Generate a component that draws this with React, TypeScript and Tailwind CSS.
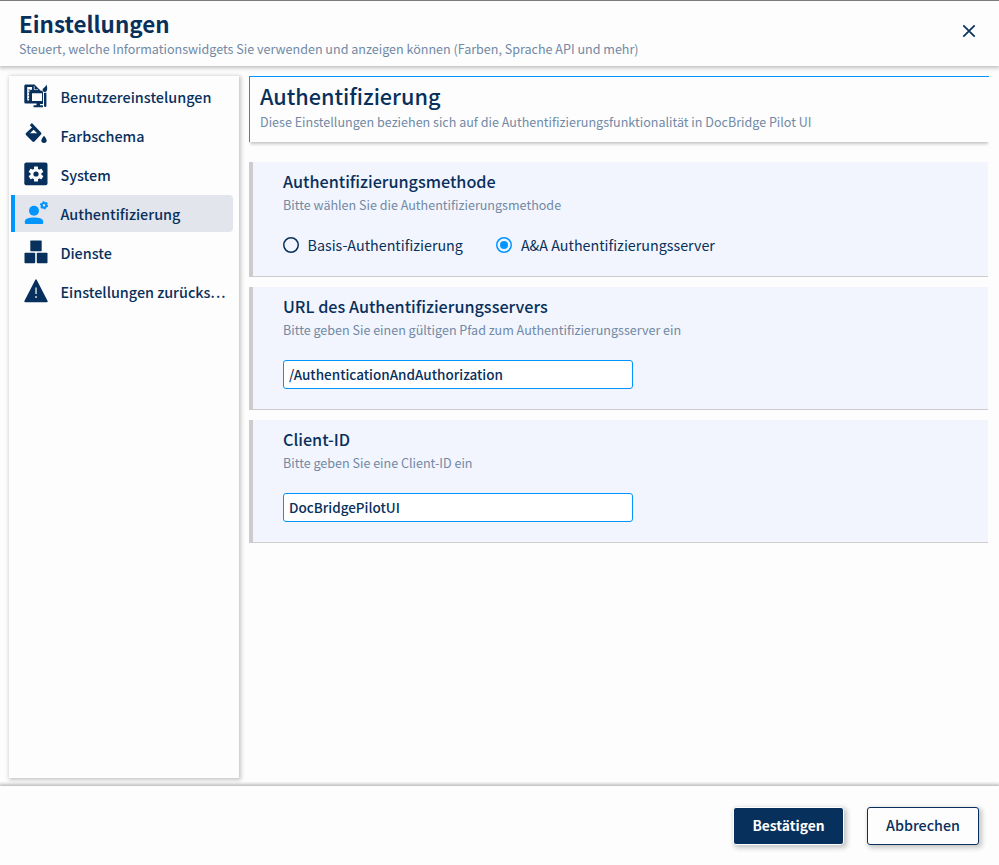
import type { ReactNode } from "react";

const svgClass = "size-6 shrink-0";

function UserSettingsIcon() {
  return (
    <svg viewBox="0 0 24 24" className={svgClass} fill="currentColor">
      <path fillRule="evenodd" d="M.3 2Q.3.500 1.500.500H10.500L16 6V8H7V19.500H1.500Q.3 19.500.3 18ZM3.200 3V16.500H5.200V8.500Q5.500 6 7 5.700H8V3Z" />
      <path d="M4.500 5.500h1.700v1H4.500zM4.500 8h1v1h-1zM4.500 11h1v1h-1zM4.500 14h1v1h-1z" />
      <path d="M10.200 2.200V5.700H14" fill="none" stroke="#fdfdfd" strokeWidth=".7" />
      <path fillRule="evenodd" d="M8 6.500H17Q19 6.500 19 8.500V20H16V21.300H18.500Q19 21.300 19 22V23.200H9.500V22Q9.500 21.300 10 21.300H12.500V19.500H7.500Q5.500 19.500 5.500 17.500V9Q5.500 6.500 8 6.500ZM8 9.200V17H18V9.200Z" />
      <path d="M20 8.700h2.400V21.500q0 1.500-1.200 1.500T20 21.500zM22.300.500q1.200 2.500.900 5-.500 2.600-2.300 2.600-2.400 0-2.400-2.100 0-1.500 1.800-2.500 1.500-1 2-3z" />
    </svg>
  );
}

function BucketIcon() {
  return (
    <svg viewBox="0 0 24 24" className={svgClass} fill="currentColor">
      <path fillRule="evenodd" d="M5.800 2.200 7.900.100 17 9.400Q17.900 10.400 17 11.400L10.500 18.500Q9.500 19.400 8.500 18.500L2 11.900Q1.100 10.900 2 10L8 4.500ZM9.600 6.700 6 10.300H13.200Z" />
      <path d="M20 12.700q2.700 3 2.700 4.500a2.700 2.700 0 0 1-5.400 0q0-1.500 2.700-4.500z" />
    </svg>
  );
}

function SystemIcon() {
  return (
    <svg viewBox="0 0 24 24" className={svgClass}>
      <rect x="0.300" y="0.500" width="23.200" height="22.800" rx="2" fill="currentColor" />
      <g fill="#fdfdfd">
        <circle cx="12" cy="12" r="5.500" />
        <rect x="10" y="4.600" width="4" height="14.800" rx=".5" />
        <rect x="10" y="4.600" width="4" height="14.800" rx=".5" transform="rotate(60 12 12)" />
        <rect x="10" y="4.600" width="4" height="14.800" rx=".5" transform="rotate(120 12 12)" />
      </g>
      <circle cx="12" cy="12" r="2.600" fill="currentColor" />
    </svg>
  );
}

function UserCogIcon() {
  return (
    <svg viewBox="0 0 24 24" className={svgClass} fill="currentColor">
      <circle cx="10" cy="9.700" r="5" />
      <path d="M.8 22V20.500Q.8 16.500 10 16.500T19.200 20.500V22Q19.200 23 18.200 23H1.800Q.8 23 .8 22Z" />
      <circle cx="20" cy="4.300" r="2.300" fill="none" stroke="currentColor" strokeWidth="2.200" />
      <circle cx="20" cy="4.300" r="3.500" fill="none" stroke="currentColor" strokeWidth="1.200" strokeDasharray="1.830 1.830" />
    </svg>
  );
}

function ServicesIcon() {
  return (
    <svg viewBox="0 0 24 24" className={svgClass} fill="currentColor">
      <rect x="6.300" y="0.500" width="11.400" height="10.700" rx=".8" />
      <rect x="0.500" y="12.700" width="10.700" height="10.600" rx=".8" />
      <rect x="12.800" y="12.700" width="10.700" height="10.600" rx=".8" />
    </svg>
  );
}

function ResetIcon() {
  return (
    <svg viewBox="0 0 24 24" className={svgClass}>
      <path d="M12 1.300 22.800 22.300H1.200Z" fill="currentColor" stroke="currentColor" strokeWidth="1.800" strokeLinejoin="round" />
      <path d="M11.200 8.500h1.700v6.500h-1.700zM11.200 17h1.700v2h-1.700z" fill="#b9c2cf" />
    </svg>
  );
}

const menu: { label: string; icon: ReactNode; active?: boolean; clipped?: boolean }[] = [
  { label: "Benutzereinstelungen", icon: <UserSettingsIcon /> },
  { label: "Farbschema", icon: <BucketIcon /> },
  { label: "System", icon: <SystemIcon /> },
  { label: "Authentifizierung", icon: <UserCogIcon />, active: true },
  { label: "Dienste", icon: <ServicesIcon /> },
  { label: "Einstellungen zurücks", icon: <ResetIcon />, clipped: true },
];

function Card({ title, hint, children }: { title: string; hint: string; children: ReactNode }) {
  return (
    <section className="mr-px border-b border-l-4 border-[#cccccc] bg-[#f2f5fd] pt-[7px] pl-[30px]">
      <h3 className="text-[16.2px] leading-6 font-medium">{title}</h3>
      <p className="mt-px text-[12.55px] leading-[22px] text-[#7189a5]">{hint}</p>
      {children}
    </section>
  );
}

function Radio({ label, checked }: { label: string; checked?: boolean }) {
  return (
    <label className="flex items-center gap-2 text-[14.3px] leading-5">
      <svg viewBox="0 0 16 16" className={checked ? "size-4 text-[#0095ff]" : "size-4"}>
        <circle cx="8" cy="8" r="7.250" fill="none" stroke="currentColor" strokeWidth="1.500" />
        {checked && <circle cx="8" cy="8" r="4" fill="currentColor" />}
      </svg>
      <span className="whitespace-nowrap pl-[0.5px]">{label}</span>
    </label>
  );
}

function Field({ value }: { value: string }) {
  return (
    <input
      readOnly
      value={value}
      className="mt-[19px] mb-5 block h-[29px] w-[350px] rounded-[3px] border border-[#0095ff] bg-white px-[5px] pb-[2px] text-[13.5px] leading-5 font-medium outline-none"
    />
  );
}

export default function App() {
  return (
    <div className="flex h-[865px] w-[999px] flex-col overflow-hidden bg-[#fdfdfd] font-['Noto_Sans_CJK_SC',sans-serif] text-[#08305c]">
      <header className="flex h-[66px] shrink-0 justify-between border-t border-[#7d7d7d] pt-[6px] pl-[19px] shadow-[0_1px_4px_1px_#00000040]">
        <div>
          <h1 className="text-[22.4px] leading-8 font-bold">Einstellungen</h1>
          <p className="mt-px text-[12.55px] leading-[18px] text-[#7189a5]">
            Steuert, welche Informationswidgets Sie verwenden und anzeigen können (Farben, Sprache API und mehr)
          </p>
        </div>
        <button className="mt-[18px] mr-6 size-3" aria-label="Schließen">
          <svg viewBox="0 0 12 12" className="size-3 overflow-visible" stroke="currentColor" strokeWidth="1.700">
            <path d="M.3.300 11.700 11.700M11.700.300.300 11.700" />
          </svg>
        </button>
      </header>

      <main className="flex min-h-0 flex-1 gap-[10px] pt-[10px] pr-[10px] pb-2 pl-[9px]">
        <nav className="flex w-[230px] shrink-0 flex-col gap-[2px] pt-[2px] pr-[6px] pl-[2px] shadow-[1px_1px_4px_1px_#00000038]">
          {menu.map((m) => (
            <div
              key={m.label}
              className={
                m.active
                  ? "flex h-[37px] items-center gap-[12.4px] rounded-r-[4px] border-l-4 border-[#0095ff] bg-[#e2e5ec] pr-[5px] pl-[9px]"
                  : "flex h-[37px] items-center gap-[12.4px] border-l-4 border-transparent pr-[5px] pl-[9px]"
              }
            >
              <span className={m.active ? "-mt-[2px] text-[#0095ff]" : "-mt-[2px]"}>{m.icon}</span>
              <span className="text-[14.4px] leading-5 font-medium whitespace-nowrap">
                {m.label}
                {m.clipped && <span className="tracking-[1.1px]">...</span>}
              </span>
            </div>
          ))}
        </nav>

        <div className="min-w-0 flex-1">
          <div className="h-[66px] border-t border-l border-t-[#0095ff] border-l-[#0095ff] pt-[3px] pl-[10px] shadow-[0_3px_3px_-1px_#00000038] [clip-path:inset(0_0_-8px_0)]">
            <h2 className="text-[21.65px] leading-8 font-medium">Authentifizierung</h2>
            <p className="mt-px text-[12.55px] leading-[18px] text-[#7189a5]">
              Diese Einstellungen beziehen sich auf die Authentifizierungsfunktionalität in DocBridge Pilot UI
            </p>
          </div>

          <div className="mt-5 flex flex-col gap-[10px]">
            <Card title="Authentifizierungsmethode" hint="Bitte wählen Sie die Authentifizierungsmethode">
              <div className="flex gap-[33.5px] pt-[19px] pb-[21px]">
                <Radio label="Basis-Authentifizierung" />
                <Radio label="A&A Authentifizierungsserver" checked />
              </div>
            </Card>
            <Card
              title="URL des Authentifizierungsservers"
              hint="Bitte geben Sie einen gültigen Pfad zum Authentifizierungsserver ein"
            >
              <Field value="/AuthenticationAndAuthorization" />
            </Card>
            <Card title="Client-ID" hint="Bitte geben Sie eine Client-ID ein">
              <Field value="DocBridgePilotUI" />
            </Card>
          </div>
        </div>
      </main>

      <footer className="flex h-[79px] shrink-0 justify-end gap-[23px] pt-[21px] pr-5 shadow-[0_-1px_3px_1px_#00000040]">
        <button className="h-[38px] w-[111px] rounded-[3px] border border-white bg-[#08305c] pb-[2px] text-[13.8px] leading-5 font-bold text-white shadow-[2px_2px_5px_1px_#00000038]">
          Bestätigen
        </button>
        <button className="h-[38px] w-[112px] rounded-[3px] border border-[#08305c] bg-[#fdfdfd] pb-[2px] text-[14.3px] leading-5 font-medium shadow-[2px_2px_5px_1px_#00000038]">
          Abbrechen
        </button>
      </footer>
    </div>
  );
}
